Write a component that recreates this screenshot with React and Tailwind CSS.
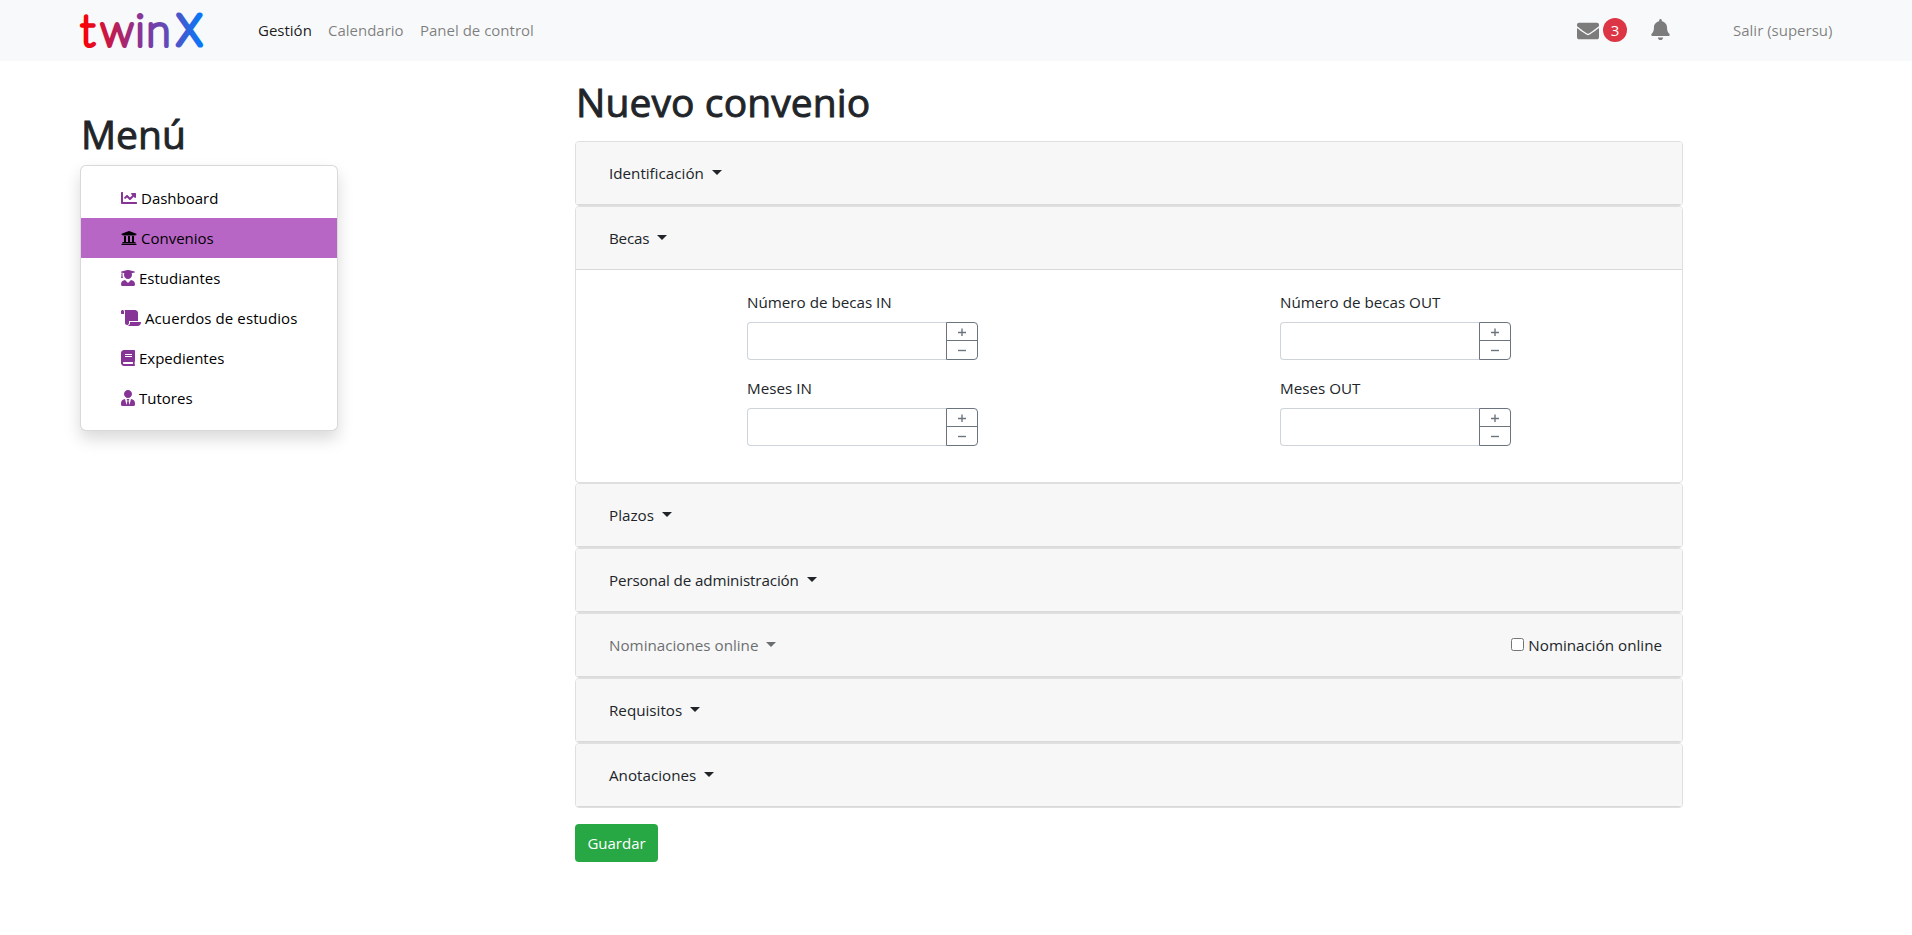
import {
  FaBell,
  FaBook,
  FaChartLine,
  FaEnvelope,
  FaScroll,
  FaUniversity,
  FaUserGraduate,
  FaUserTie,
} from "react-icons/fa";

const menu = [
  { label: "Dashboard", Icon: FaChartLine, size: "w-4" },
  { label: "Convenios", Icon: FaUniversity, size: "w-4", active: true },
  { label: "Estudiantes", Icon: FaUserGraduate, size: "w-3.5" },
  { label: "Acuerdos de estudios", Icon: FaScroll, size: "w-5", tracking: "tracking-[0.1px]" },
  { label: "Expedientes", Icon: FaBook, size: "w-3.5" },
  { label: "Tutores", Icon: FaUserTie, size: "w-3.5" },
];

function Logo() {
  return (
    <svg width="128" height="60" viewBox="0 0 128 60" className="overflow-visible" role="img" aria-label="twinX">
      <defs>
        <linearGradient id="brand" gradientUnits="userSpaceOnUse" x1="0" y1="0" x2="124" y2="0">
          <stop offset="0" stopColor="#ff0000" />
          <stop offset="0.5" stopColor="#85369a" />
          <stop offset="0.75" stopColor="#5750c0" />
          <stop offset="1" stopColor="#007bff" />
        </linearGradient>
      </defs>
      <g
        fill="url(#brand)"
        stroke="url(#brand)"
        strokeWidth="4"
        strokeLinejoin="round"
        fontFamily="Lato, sans-serif"
        fontWeight="100"
        fontSize="44"
      >
        <text y="45.500" x="0.500">t</text>
        <text y="45.500" x="20.500" textLength="33" lengthAdjust="spacingAndGlyphs">w</text>
        <text y="45.500" x="55.500">i</text>
        <text y="45.500" x="66.500">n</text>
        <text y="45" x="97" fontSize="41" strokeWidth="5.200">X</text>
      </g>
    </svg>
  );
}

function Navbar() {
  return (
    <nav className="flex h-[61px] items-center bg-[#f8f9fa] pb-px pl-20 pr-[79px] text-[15px]">
      <Logo />
      <div className="ml-[50px] flex gap-4 text-black/50">
        <a className="w-[54px] whitespace-nowrap text-black/90">Gestión</a>
        <a className="w-[76px] whitespace-nowrap">Calendario</a>
        <a className="whitespace-nowrap">Panel de control</a>
      </div>
      <div className="ml-auto flex items-center">
        <FaEnvelope className="mt-0.5 size-[22px] text-[#7c7c7d]" />
        <span className="ml-1 flex size-6 items-center justify-center rounded-full bg-[#dc3545] text-white">3</span>
        <FaBell className="-mt-0.5 ml-6 h-[21px] w-[19px] text-[#7c7c7d]" />
        <a className="ml-[63px] w-[100px] whitespace-nowrap text-black/50">Salir (supersu)</a>
      </div>
    </nav>
  );
}

function SideMenu() {
  return (
    <aside className="w-[258px] pt-[49px]">
      <h1 className="mb-[7px] pl-px text-[39px] leading-12 font-normal [-webkit-text-stroke:0.9px_currentColor]">
        Menú
      </h1>
      <ul className="rounded-md border border-black/15 bg-white py-3 text-[15px] shadow-[0_8px_16px_rgba(0,0,0,0.15)]">
        {menu.map(({ label, Icon, size, active, tracking = "" }) => (
          <li
            key={label}
            className={`flex h-10 items-center gap-1 pl-10 text-black ${active ? "bg-[#b866c6]" : ""}`}
          >
            <Icon className={`h-4 shrink-0 ${size} ${active ? "text-black" : "text-[#863596]"}`} />
            <span className={`whitespace-nowrap ${tracking}`}>{label}</span>
          </li>
        ))}
      </ul>
    </aside>
  );
}

function Panel({ title, disabled, extra, children, tracking = "" }) {
  return (
    <section className="overflow-hidden rounded border border-[#dfdfdf]">
      <header className="flex h-[63px] items-center justify-between border-b border-[#d9d9d9] bg-[#f7f7f7] pr-5 pl-[33px]">
        <button className={`flex items-center ${tracking} ${disabled ? "opacity-65" : ""}`}>
          {title}
          <span className="mb-0.5 ml-2 border-x-[5px] border-t-[5px] border-x-transparent border-t-[#212529]" />
        </button>
        {extra}
      </header>
      {children}
    </section>
  );
}

function NumberField({ label }) {
  return (
    <div className="mb-4 w-[231px]">
      <label className="mb-2 block leading-6">{label}</label>
      <div className="flex h-[38px]">
        <div className="w-[199px] rounded-l border border-r-0 border-[#ced4da] bg-white" />
        <div className="flex w-8 flex-col rounded-r border border-[#6c757d] text-[#6c757d]">
          <button className="flex h-[18px] items-center justify-center border-b border-[#6c757d]">
            <svg width="8" height="8" viewBox="0 0 8 8" stroke="currentColor" strokeWidth="1.4">
              <path d="M0 4.500H8M4 .500V8" />
            </svg>
          </button>
          <button className="flex h-[18px] items-center justify-center">
            <svg width="8" height="8" viewBox="0 0 8 8" stroke="currentColor" strokeWidth="1.4">
              <path d="M0 4.500H8" />
            </svg>
          </button>
        </div>
      </div>
    </div>
  );
}

function Nomination() {
  return (
    <label className="flex items-center gap-1">
      <span className="mb-0.5 size-[13px] rounded-[2.5px] border border-[#767676] bg-white" />
      Nominación online
    </label>
  );
}

export default function App() {
  return (
    <div className="min-h-[935px] bg-white font-['Open_Sans',sans-serif] text-[15.2px] leading-6 text-[#212529]">
      <Navbar />
      <div className="flex pl-20">
        <SideMenu />
        <main className="ml-[237px] w-[1108px] pt-[17px]">
          <h1 className="mb-[15px] pl-px text-[39px] leading-12 font-normal tracking-[0.1px] [-webkit-text-stroke:0.9px_currentColor]">
            Nuevo convenio
          </h1>
          <Panel title="Identificación" />
          <Panel title="Becas" tracking="tracking-[-0.2px]">
            <div className="grid h-[212px] grid-cols-[533px_1fr] content-start pt-5 pl-[171px]">
              <NumberField label="Número de becas IN" />
              <NumberField label="Número de becas OUT" />
              <NumberField label="Meses IN" />
              <NumberField label="Meses OUT" />
            </div>
          </Panel>
          <Panel title="Plazos" />
          <Panel title="Personal de administración" tracking="tracking-[-0.13px]" />
          <Panel title="Nominaciones online" disabled extra={<Nomination />} />
          <Panel title="Requisitos" />
          <Panel title="Anotaciones" />
          <button className="mt-4 h-[38px] w-[83px] rounded bg-[#28a745] text-[15px] text-white">Guardar</button>
        </main>
      </div>
    </div>
  );
}
